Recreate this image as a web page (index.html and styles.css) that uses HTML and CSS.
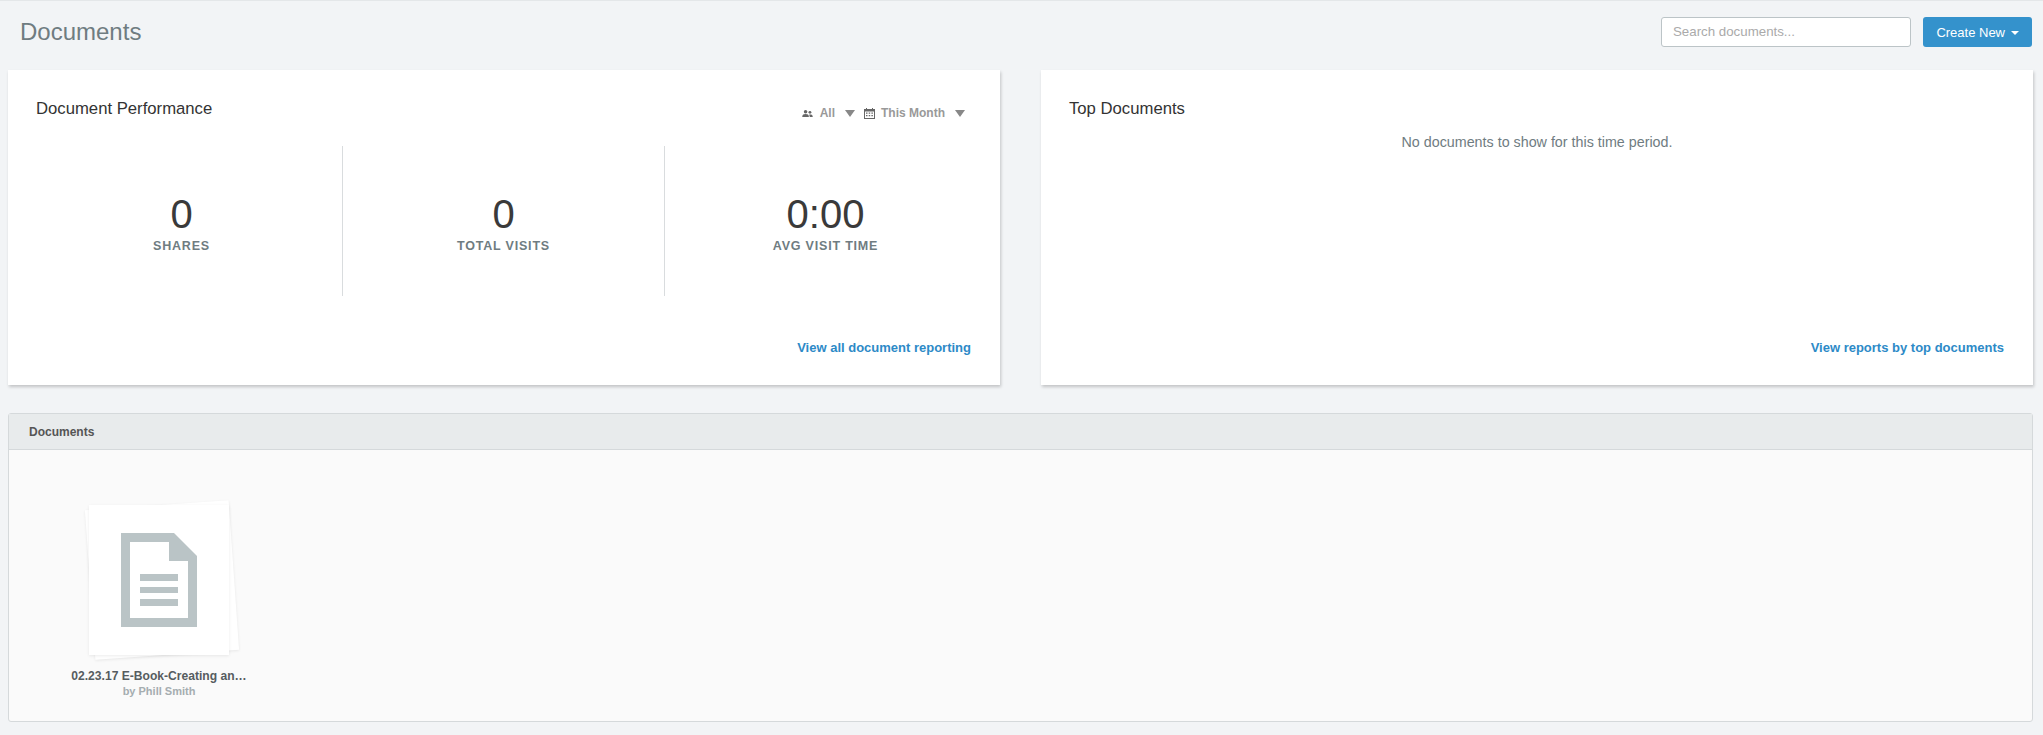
FILE: index.html
```html
<!DOCTYPE html>
<html lang="en">
<head>
  <meta charset="UTF-8" />
  <title>Documents</title>
  <link rel="stylesheet" href="styles.css">
</head>
<body>
  <header class="page-head">
    <h1>Documents</h1>
    <div class="head-actions">
      <input type="text" class="search" placeholder="Search documents..." />
      <button class="create-btn">Create New <span class="caret"></span></button>
    </div>
  </header>

  <div class="cards">
    <section class="card">
      <div class="card-top">
        <h2>Document Performance</h2>
        <div class="filters">
          <svg class="filter-icon people" viewBox="0 0 12 8" width="11" height="7"><circle cx="3.800" cy="2" r="2"/><path d="M0 8c0-2.800 1.500-3.500 3.800-3.500S7.600 5.200 7.600 8z"/><circle cx="8.800" cy="2.600" r="1.600"/><path d="M8.800 5c2 0 3.200.5 3.200 3H8.600c0-1.200-.3-2-.9-2.700z"/></svg>
          <span class="filter-label">All</span>
          <span class="filter-arrow"></span>
          <svg class="filter-icon" viewBox="0 0 11 11" width="11" height="11"><path fill-rule="evenodd" d="M0 1h2V0h1v1h5V0h1v1h2v10H0zM1 3.500V10h9V3.500z"/><path d="M2 4.500h1.500v1.300H2zM4.700 4.500h1.500v1.300H4.700zM7.400 4.500h1.500v1.300H7.400zM2 7h1.500v1.300H2zM4.700 7h1.500v1.300H4.700zM7.400 7h1.500v1.300H7.400z"/></svg>
          <span class="filter-label">This Month</span>
          <span class="filter-arrow last"></span>
        </div>
      </div>
      <div class="stats">
        <div class="stat"><div class="stat-num">0</div><div class="stat-label">SHARES</div></div>
        <div class="stat"><div class="stat-num">0</div><div class="stat-label">TOTAL VISITS</div></div>
        <div class="stat"><div class="stat-num">0:00</div><div class="stat-label">AVG VISIT TIME</div></div>
      </div>
      <a class="card-link" href="#">View all document reporting</a>
    </section>

    <section class="card">
      <div class="card-top">
        <h2>Top Documents</h2>
      </div>
      <p class="empty">No documents to show for this time period.</p>
      <a class="card-link" href="#">View reports by top documents</a>
    </section>
  </div>

  <section class="panel">
    <div class="panel-head">Documents</div>
    <div class="panel-body">
      <div class="doc">
        <div class="thumb">
          <svg class="doc-icon" viewBox="0 0 76 94" width="76" height="94">
            <path fill-rule="evenodd" d="M0 0h53l23 23v71H0zM9 9v76h58V28H48V9z"/>
            <path d="M19 41h38v7H19zM19 54h38v6H19zM19 66h38v7H19z"/>
          </svg>
        </div>
        <div class="doc-title">02.23.17 E-Book-Creating an…</div>
        <div class="doc-author">by Phill Smith</div>
      </div>
    </div>
  </section>
</body>
</html>
```

FILE: styles.css
```css
body {
  font-family: "Liberation Sans", Arial, sans-serif;
  margin: 0;
  background-color: #f2f4f6;
  color: #333;
  border-top: 1px solid #e4e7e9;
  height: 734px;
  overflow: hidden;
}

.page-head {
  display: flex;
  justify-content: space-between;
  align-items: center;
  height: 62px;
  padding: 0 11px 0 20px;
  margin-bottom: 7px;
}

h1 {
  margin: 0;
  font-size: 24px;
  font-weight: normal;
  color: #6f7c81;
}

.head-actions {
  display: flex;
  gap: 12px;
}

.search {
  box-sizing: border-box;
  width: 250px;
  height: 30px;
  padding: 0 11px 2px;
  border: 1px solid #bcc4c7;
  border-radius: 3px;
  font-family: inherit;
  font-size: 13.3px;
}

.search::placeholder {
  color: #aaa;
}

.create-btn {
  width: 109px;
  height: 30px;
  background-color: #3492cc;
  color: white;
  border: none;
  border-radius: 3px;
  font-family: inherit;
  font-size: 13px;
  padding: 0;
}

.caret {
  display: inline-block;
  border-top: 4px solid white;
  border-left: 4px solid transparent;
  border-right: 4px solid transparent;
  vertical-align: middle;
  margin-left: 2px;
}

.cards {
  display: flex;
  gap: 41px;
  padding: 0 10px 0 8px;
}

.card {
  position: relative;
  box-sizing: border-box;
  flex: 1 1 0;
  min-width: 0;
  height: 315px;
  background-color: #fff;
  box-shadow: 1px 2px 3px rgba(0, 0, 0, 0.2);
  padding: 29px 28px 0;
}

.card-top {
  display: flex;
  justify-content: space-between;
}

h2 {
  margin: 0;
  font-size: 16.7px;
  line-height: 20px;
  font-weight: normal;
  color: #333;
}

.filters {
  display: flex;
  align-items: center;
  margin: 6px 7px 0 0;
  height: 16px;
}

.filter-icon {
  fill: #666;
  margin-right: 6px;
}

.people {
  margin-right: 7px;
}

.filter-label {
  font-size: 12px;
  font-weight: bold;
  color: #999;
}

.filter-arrow {
  border-top: 7px solid #888;
  border-left: 5px solid transparent;
  border-right: 5px solid transparent;
  margin: 0 9px 0 10px;
}

.filter-arrow.last {
  margin-right: 0;
}

.stats {
  display: flex;
  margin: 25px -14px 0 -15px;
}

.stat {
  flex: 1;
  height: 150px;
  text-align: center;
  padding-top: 44px;
  box-sizing: border-box;
  border-right: 1px solid #d9dcde;
}

.stat:last-child {
  border-right: none;
}

.stat-num {
  font-size: 40px;
  line-height: 48px;
  color: #3a3a3a;
}

.stat-label {
  font-size: 12.5px;
  font-weight: bold;
  letter-spacing: 0.8px;
  line-height: 16px;
  color: #6f7c81;
}

.empty {
  margin: 15px 0 0;
  text-align: center;
  font-size: 14.3px;
  color: #6f7c81;
}

.card-link {
  position: absolute;
  right: 29px;
  bottom: 30px;
  font-size: 13px;
  font-weight: bold;
  color: #2d8ac7;
  text-decoration: none;
}

.panel {
  margin: 28px 10px 0 8px;
  height: 309px;
  box-sizing: border-box;
  border: 1px solid #d5d9db;
  border-radius: 3px;
  background-color: #fafafa;
}

.panel-head {
  height: 35px;
  line-height: 37px;
  padding-left: 20px;
  background-color: #e8ebec;
  border-bottom: 1px solid #d5d9db;
  font-size: 12px;
  font-weight: bold;
  color: #555;
}

.panel-body {
  padding: 55px 0 0 50px;
}

.doc {
  width: 200px;
  text-align: center;
  isolation: isolate;
}

.thumb {
  position: relative;
  display: flex;
  align-items: center;
  justify-content: center;
  width: 140px;
  height: 150px;
  margin: 0 auto;
  background-color: #fff;
  box-shadow: 0 1px 3px rgba(0, 0, 0, 0.08);
}

.thumb::before {
  content: "";
  position: absolute;
  inset: 0 -2px;
  background-color: #fff;
  box-shadow: 0 1px 3px rgba(0, 0, 0, 0.08);
  transform: translate(3px, 0) rotate(-4deg);
  z-index: -1;
}

.doc-icon {
  fill: #bac4c6;
}

.doc-title {
  margin-top: 14px;
  font-size: 12.1px;
  font-weight: bold;
  color: #565c60;
}

.doc-author {
  margin-top: 2px;
  font-size: 11px;
  font-weight: bold;
  color: #a5adb0;
}
```
